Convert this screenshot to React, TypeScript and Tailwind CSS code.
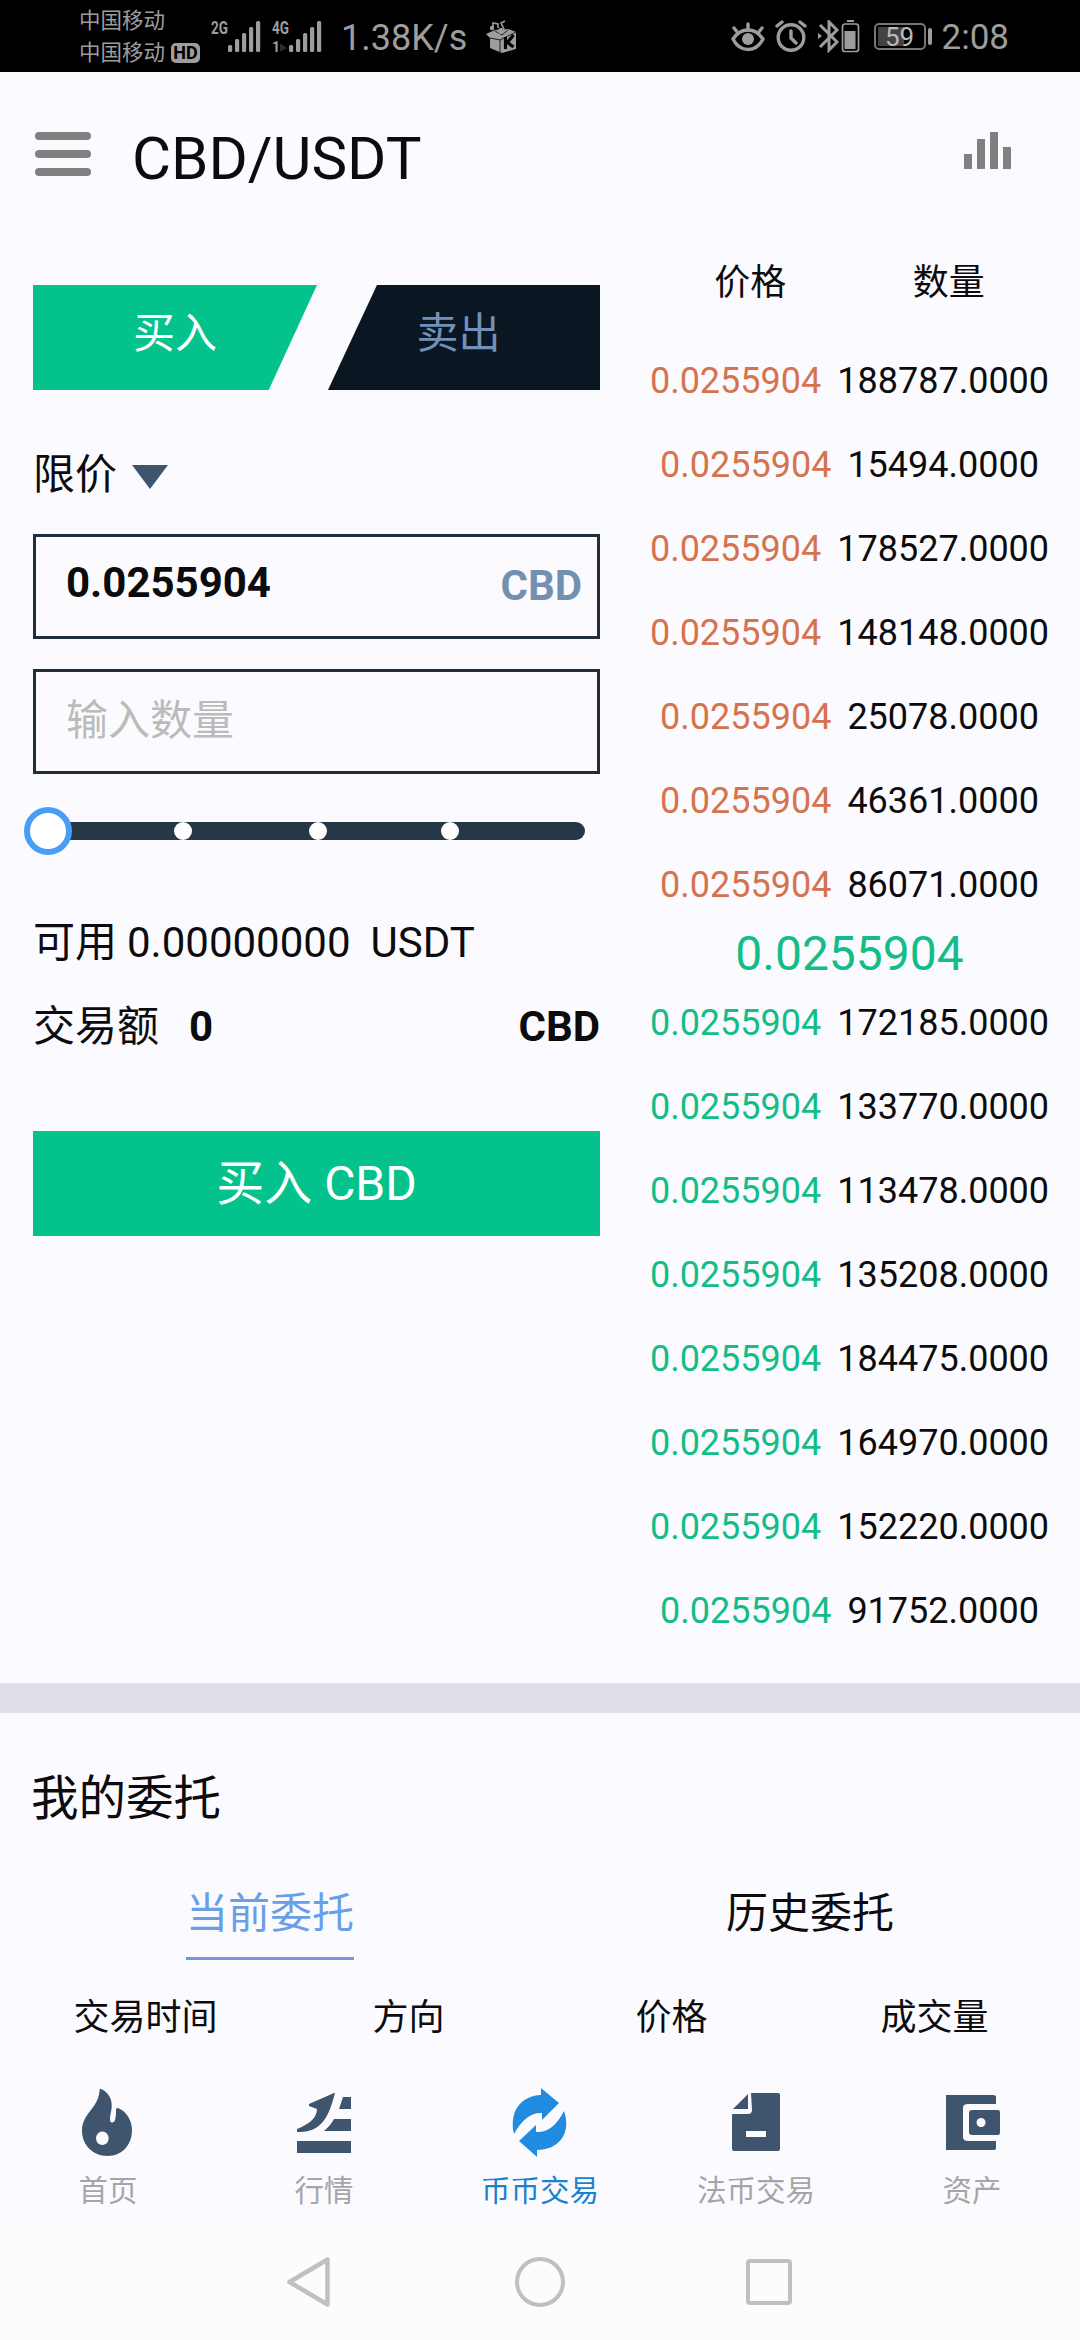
import clsx from "clsx";

type Order = {
  price: string;
  amount: string;
};

const asks: Order[] = [
  { price: "0.0255904", amount: "188787.0000" },
  { price: "0.0255904", amount: "15494.0000" },
  { price: "0.0255904", amount: "178527.0000" },
  { price: "0.0255904", amount: "148148.0000" },
  { price: "0.0255904", amount: "25078.0000" },
  { price: "0.0255904", amount: "46361.0000" },
  { price: "0.0255904", amount: "86071.0000" },
];

const bids: Order[] = [
  { price: "0.0255904", amount: "172185.0000" },
  { price: "0.0255904", amount: "133770.0000" },
  { price: "0.0255904", amount: "113478.0000" },
  { price: "0.0255904", amount: "135208.0000" },
  { price: "0.0255904", amount: "184475.0000" },
  { price: "0.0255904", amount: "164970.0000" },
  { price: "0.0255904", amount: "152220.0000" },
  { price: "0.0255904", amount: "91752.0000" },
];

function Signal() {
  return (
    <svg className="h-[31px] w-[33px]" viewBox="0 0 33 31" fill="#9d9d9d">
      <rect x="0" y="24" width="4.2" height="7" rx="1.5" />
      <rect x="7" y="18" width="4.2" height="13" rx="1.5" />
      <rect x="14" y="12" width="4.2" height="19" rx="1.5" />
      <rect x="21" y="6" width="4.2" height="25" rx="1.5" />
      <rect x="28" y="0" width="4.2" height="31" rx="1.5" />
    </svg>
  );
}

function StatusBar() {
  return (
    <div className="flex h-[72px] justify-between bg-black pl-[79px] pr-[71px] text-[#9d9d9d]">
      <div className="flex">
        <div className="w-[132px] pt-[5px] text-[21.5px] leading-[32px]">
          <div>中国移动</div>
          <div className="flex items-center">
            中国移动
            <span className="ml-[6px] flex h-[20px] w-[29px] items-center justify-center rounded-[5px] bg-[#9d9d9d] text-[18px] font-bold leading-none text-black">
              HD
            </span>
          </div>
        </div>
        <div className="flex w-[61px] pt-[21px]">
          <span className="w-[17px] origin-left scale-x-75 text-[18px] font-bold leading-[14px]">
            2G
          </span>
          <Signal />
        </div>
        <div className="flex w-[69px] pt-[21px]">
          <div className="w-[17px] text-[18px] font-bold leading-[14px]">
            <div className="origin-left scale-x-75">4G</div>
            <div className="mt-[6px] flex items-center text-[14px] leading-[12px]">
              1
              <svg className="h-[9px] w-[7px]" viewBox="0 0 8 9" fill="#2c2c2c">
                <path d="M0 0 8 5 0 9z" />
              </svg>
            </div>
          </div>
          <Signal />
        </div>
        <span className="w-[145px] text-[36px] leading-[76px]">1.38K/s</span>
        <svg className="mt-[20px] h-[34px] w-[32px]" viewBox="0 0 32 34">
          <path
            fill="#9d9d9d"
            d="M0 14 9 10 22 9 30 12V29L16 33 4 28V18z"
          />
          <path fill="none" stroke="#111" strokeWidth="0.9" d="M4 18 14 20 30 12M14 20v12M9 11l7 4 6-5" />
          <path fill="none" stroke="#000" strokeWidth="3.2" d="M19.500 17v12M27.500 15l-6 7.500 6 4.500" />
          <circle cx="6" cy="8" r="2.200" fill="#9d9d9d" />
          <circle cx="15" cy="11" r="3" fill="#9d9d9d" />
          <path fill="none" stroke="#9d9d9d" strokeWidth="1.600" d="M7 7V3l5 1v4M18 9l-3-6 4-2" />
        </svg>
      </div>
      <div className="flex">
        <svg className="mt-[21px] h-[32px] w-[36px]" viewBox="0 0 36 32" fill="none" stroke="#9d9d9d" strokeWidth="3.4">
          <path strokeLinecap="round" d="M18 3v6M4 7l4 5M32 7l-4 5" />
          <path d="M3 18C11 6 25 6 33 18 26 32 10 32 3 18z" />
          <circle cx="18" cy="18" r="6" fill="#9d9d9d" stroke="none" />
        </svg>
        <svg className="ml-[9px] mt-[20px] h-[32px] w-[32px]" viewBox="0 0 32 32" fill="none" stroke="#9d9d9d" strokeWidth="3.4">
          <circle cx="16" cy="17.500" r="12.800" />
          <path strokeLinecap="round" d="M16 11v7l5 5M2 6l5-4M30 6l-5-4" />
        </svg>
        <svg className="ml-[10px] mt-[20px] h-[33px] w-[43px]" viewBox="0 0 43 33" fill="none" stroke="#9d9d9d">
          <path strokeWidth="3" d="M3 5l17 17-8 8V2l8 8L3 27" />
          <path fill="#9d9d9d" stroke="none" d="M1 13l4 3-4 3zM30 0h7v2h-7zM27.500 11h11v18h-11z" />
          <rect x="25.500" y="4" width="16" height="27.500" rx="2.500" strokeWidth="1.700" />
        </svg>
        <div className="ml-[14px] mt-[23px] flex h-[27px] w-[52px] rounded-[5px] border-2 border-[#777] p-[2px]">
          <div className="h-full w-[26px] bg-[#434343]">
            <div className="w-[44px] text-center text-[26px] leading-[21px] text-[#b9b9b9]">59</div>
          </div>
        </div>
        <div className="ml-[2px] mt-[28px] h-[17px] w-[4px] rounded-sm bg-[#9d9d9d]" />
        <span className="ml-[10px] text-[35px] leading-[75px]">2:08</span>
      </div>
    </div>
  );
}

function OrderRow({ order, up }: { order: Order; up?: boolean }) {
  return (
    <div className="flex h-[84px] items-center justify-center gap-[16px] text-[36px]">
      <span className={up ? "text-[#13bd87]" : "text-[#d6734f]"}>{order.price}</span>
      <span>{order.amount}</span>
    </div>
  );
}

function TradeForm() {
  return (
    <div className="w-[567px] text-[42px]">
      {/* the two tabs are cut diagonally against each other */}
      <div className="mt-[50px] flex justify-between leading-[98px]">
        <div className="h-[105px] w-[284px] bg-[#04c28b] text-center text-white [clip-path:polygon(0_0,100%_0,83%_100%,0_100%)]">
          买入
        </div>
        <div className="h-[105px] w-[272px] bg-[#0a1722] pr-[11px] text-center text-[#7390b8] [clip-path:polygon(18%_0,100%_0,100%_100%,0_100%)]">
          卖出
        </div>
      </div>
      <div className="mt-[54px] flex h-[60px] items-center">
        限价
        <svg className="ml-[15px] mt-[5px] h-[24px] w-[36px]" viewBox="0 0 36 24" fill="#3f546d">
          <path d="M0 0h36L18 24z" />
        </svg>
      </div>
      <div className="mt-[30px] flex h-[105px] justify-between border-[3px] border-[#202d3b] pl-[30px] pr-[15px] font-bold">
        <span className="leading-[92px]">0.0255904</span>
        <span className="leading-[98px] text-[#7490b0]">CBD</span>
      </div>
      <div className="mt-[30px] h-[105px] border-[3px] border-[#202d3b] pl-[30px] leading-[98px] text-[#bbb]">
        输入数量
      </div>
      <div className="relative mt-[48px] ml-[6px] h-[18px] w-[546px] rounded-full bg-[#263746]">
        <span className="absolute -left-[15px] -top-[15px] size-[48px] rounded-full border-[6px] border-[#489df7] bg-white" />
        <span className="absolute left-[135px] size-[18px] rounded-full bg-white" />
        <span className="absolute left-[270px] size-[18px] rounded-full bg-white" />
        <span className="absolute left-[402px] size-[18px] rounded-full bg-white" />
      </div>
      <div className="mt-[60px] flex h-[84px] items-center">
        <span>可用</span>
        <span className="ml-[10px]">0.00000000</span>
        <span className="ml-[20px]">USDT</span>
      </div>
      <div className="flex h-[84px] items-center">
        <span>交易额</span>
        <b className="ml-[30px]">0</b>
        <b className="ml-auto">CBD</b>
      </div>
      <div className="mt-[63px] h-[105px] bg-[#04c28b] text-center text-[48px] leading-[105px] text-white">
        买入 CBD
      </div>
    </div>
  );
}

function OrderBook() {
  return (
    <div className="w-[397px]">
      <div className="mt-[6px] flex h-[84px] items-center justify-around text-[36px]">
        <span>价格</span>
        <span>数量</span>
      </div>
      <div className="mt-[14px]">
        {asks.map((order) => (
          <OrderRow key={order.amount} order={order} />
        ))}
      </div>
      <div className="flex h-[54px] items-center justify-center text-[48px] text-[#13bd87]">
        0.0255904
      </div>
      <div>
        {bids.map((order) => (
          <OrderRow key={order.amount} order={order} up />
        ))}
      </div>
    </div>
  );
}

const tabs = [
  {
    label: "首页",
    icon: (
      <path
        fillRule="evenodd"
        d="M25 1C32 4 37 11 35.500 21 34 29 33 34 35.500 34.500 39 35 40 31 40 22Q40 19 43 20.500C51 24 56 33 56 42 56 57 46 68 31.500 68 17 68 6 57 6 43 6 25 22 21 23.500 3Q23.500 0 25 1zM26.300 43.600a6.300 6.700 0 1 0 .1 0z"
      />
    ),
  },
  {
    label: "行情",
    icon: (
      <path d="M43 5C37 27 31 45 5 44V41C15 37 25 31 25 21L17 18V16L42 5zM51 9H59V21H47zM42 31H59V43H32Q39 37 42 31zM5 53H59V65H5z" />
    ),
  },
  {
    label: "币币交易",
    icon: (
      <path d="M33 0 51 15 34 32V25Q18 24 6 46C1 24 12 8 33 7zM56 23C64 46 50 62 29 62V69L11 53 28 37V44Q45 45 56 23z" />
    ),
  },
  {
    label: "法币交易",
    icon: (
      <path
        fillRule="evenodd"
        d="M24 6V21H9zM27 5H54Q56 5 56 7V61Q56 63 54 63H10Q8 63 8 61V27Q8 26 9 26H24Q28 26 28 22zM22 43V49H42V43z"
      />
    ),
  },
  {
    label: "资产",
    icon: (
      <path
        fillRule="evenodd"
        d="M6 7H53Q56 7 56 9V16H28Q23 16 23 20V49Q23 53 28 53H56V60Q56 62 53 62H6zM32 22H58Q60 22 60 25V44Q60 47 58 47H32Q29 47 29 44V25Q29 22 32 22zM41 30a4.500 4.500 0 1 0 .1 0z"
      />
    ),
  },
];

function TabBar() {
  return (
    <div className="grid h-[163px] grid-cols-5">
      {tabs.map((tab) => {
        const active = tab.label === "币币交易";
        return (
          <div key={tab.label} className="flex flex-col items-center pt-[28px]">
            <svg className="h-[70px] w-[64px]" viewBox="0 0 64 70" fill={active ? "#218cdf" : "#3f546d"}>
              {tab.icon}
            </svg>
            <span
              className={clsx(
                "mt-[11px] text-[29.5px] leading-[45px]",
                active ? "text-[#1b80d0]" : "text-[#a5a5a8]"
              )}
            >
              {tab.label}
            </span>
          </div>
        );
      })}
    </div>
  );
}

function NavBar() {
  return (
    <div className="flex h-[117px] items-center bg-[#fcfcfc]">
      <svg className="ml-[286px] h-[52px] w-[45px]" viewBox="0 0 45 52" fill="none" stroke="#c0c0c0" strokeWidth="4.5">
        <path strokeLinejoin="round" d="M41.500 3.500v45L3.500 26z" />
      </svg>
      <div className="ml-[184px] size-[50px] rounded-full border-4 border-[#c0c0c0]" />
      <div className="ml-[181px] size-[46px] rounded-[4px] border-4 border-[#c0c0c0]" />
    </div>
  );
}

export default function App() {
  return (
    <div className="h-[2340px] w-[1080px] overflow-hidden bg-[#fbfbff] font-['Roboto','Noto_Sans_CJK_SC',sans-serif] text-[#0c0c0e]">
      <StatusBar />
      <div className="flex h-[163px] justify-between pl-[35px] pr-[69px]">
        <div className="flex">
          <div className="mt-[60px] flex w-[56px] flex-col gap-[10px]">
            <div className="h-[8px] rounded-[4px] bg-[#808080]" />
            <div className="h-[8px] rounded-[4px] bg-[#808080]" />
            <div className="h-[8px] rounded-[4px] bg-[#808080]" />
          </div>
          <h1 className="ml-[41px] mt-[52px] text-[60px] leading-[70px]">CBD/USDT</h1>
        </div>
        <div className="mt-[60px] flex h-[37px] items-end gap-[5px]">
          <div className="h-[15px] w-[8px] bg-[#808080]" />
          <div className="h-[30px] w-[8px] bg-[#808080]" />
          <div className="h-[37px] w-[8px] bg-[#808080]" />
          <div className="h-[22px] w-[8px] bg-[#808080]" />
        </div>
      </div>
      <div className="flex h-[1448px] justify-between pl-[33px] pr-[32px]">
        <TradeForm />
        <OrderBook />
      </div>
      <div className="h-[30px] bg-[#dfdfe9]" />
      <div className="h-[347px]">
        <h2 className="h-[158px] pl-[31px] pt-[50px] text-[47.5px] leading-[72px]">我的委托</h2>
        <div className="flex h-[94px] justify-around text-[42px] leading-[86px]">
          <span className="h-[89px] border-b-[3px] border-[#6f97dc] text-[#6a9fe6]">当前委托</span>
          <span>历史委托</span>
        </div>
        <div className="grid h-[95px] grid-cols-4 px-[14px] text-center text-[36px] leading-[107px]">
          <span>交易时间</span>
          <span>方向</span>
          <span>价格</span>
          <span>成交量</span>
        </div>
      </div>
      <TabBar />
      <NavBar />
    </div>
  );
}
